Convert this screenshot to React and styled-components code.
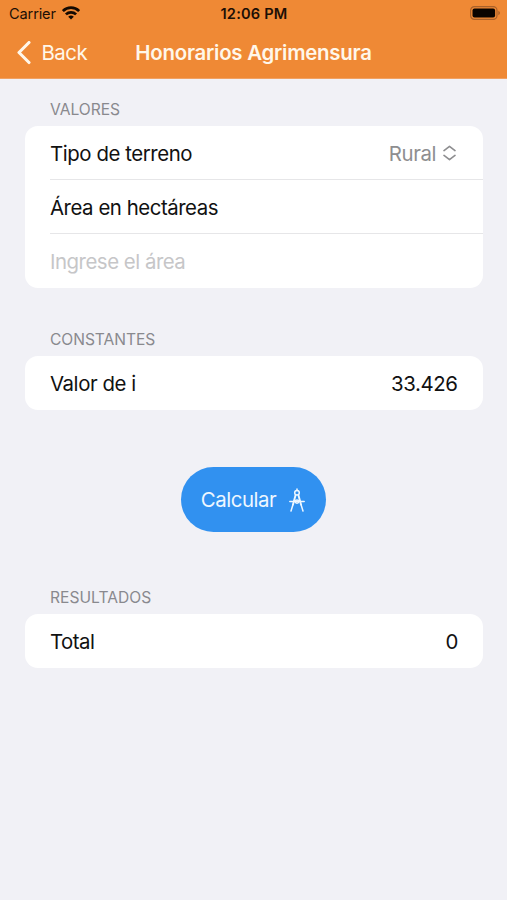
import React from "react";
import styled, { createGlobalStyle } from "styled-components";

const GlobalStyle = createGlobalStyle`
  * { box-sizing: border-box; }
  body {
    margin: 0;
    background: #f1f1f6;
    font-family: Inter, "Liberation Sans", sans-serif;
    -webkit-font-smoothing: antialiased;
  }
`;

const Screen = styled.div`
  width: 507px;
  height: 900px;
  overflow: hidden;
  background: #f1f1f6;
  display: flex;
  flex-direction: column;
`;

const Header = styled.header`
  height: 79px;
  background: #ef8935;
  border-bottom: 1px solid #f0a163;
`;

const StatusBar = styled.div`
  height: 27px;
  padding: 1px 7px 0 9px;
  display: grid;
  grid-template-columns: 1fr auto 1fr;
  align-items: center;
  color: #1c0f05;
  font-size: 14.6px;
  line-height: 26px;
`;

const Carrier = styled.div`
  display: flex;
  align-items: center;
  gap: 6px;
  letter-spacing: -0.15px;

  svg {
    margin-top: -3px;
  }
`;

const Clock = styled.div`
  font-weight: 600;
  letter-spacing: 0.2px;
  margin-right: 1px;
`;

const Battery = styled.div`
  display: flex;
  justify-content: flex-end;
  margin-top: -2px;
`;

const NavBar = styled.nav`
  height: 51px;
  padding: 0 17px;
  display: grid;
  grid-template-columns: 1fr auto 1fr;
  align-items: center;
  color: #fff7ea;
`;

const BackButton = styled.button`
  display: flex;
  align-items: center;
  gap: 10.5px;
  padding: 0;
  border: 0;
  background: none;
  color: inherit;
  font: inherit;
  font-size: 20.4px;
  letter-spacing: -0.5px;
`;

const Title = styled.h1`
  margin: 0;
  font-size: 20.4px;
  font-weight: 600;
  letter-spacing: -0.24px;
`;

const Form = styled.main`
  padding: 0 24.5px 0 25px;
  display: flex;
  flex-direction: column;
`;

const Section = styled.section`
  margin-top: ${(p) => p.$top}px;
`;

const SectionTitle = styled.h2`
  margin: 0 0 6.5px 25px;
  height: 20px;
  line-height: 20px;
  font-size: 15.6px;
  font-weight: 400;
  color: #89898e;
  letter-spacing: ${(p) => p.$track}px;
`;

const Card = styled.div`
  background: #fff;
  border-radius: 13px;
  overflow: hidden;
`;

const Row = styled.div`
  height: 54px;
  margin-left: 25px;
  padding: 1px 25px 0 0;
  display: flex;
  align-items: center;
  justify-content: space-between;
  font-size: 20.4px;
  color: #111;

  &:not(:last-child) {
    padding-top: 2px;
    border-bottom: 1px solid #e6e6e8;
  }

  &:last-child {
    height: 53.5px;
  }
`;

const Text = styled.span`
  letter-spacing: ${(p) => p.$track || 0}px;
  white-space: nowrap;
`;

const Picker = styled.span`
  display: flex;
  align-items: center;
  gap: 7px;
  margin-right: 1.5px;
  color: #8e8e90;

  svg {
    margin-top: -1px;
  }
`;

const AreaInput = styled.input`
  width: 100%;
  padding: 0;
  border: 0;
  outline: 0;
  background: none;
  font: inherit;
  letter-spacing: -0.48px;

  &::placeholder {
    color: #c6c6c8;
    opacity: 1;
  }
`;

const CalcButton = styled.button`
  align-self: center;
  margin-top: 57.3px;
  width: 145px;
  height: 65px;
  padding: 0 2px 0 0;
  border: 0;
  border-radius: 33px;
  background: #3191f0;
  color: #eef7ff;
  font: inherit;
  font-size: 20.4px;
  display: flex;
  align-items: center;
  justify-content: center;
  gap: 12.5px;

  svg {
    margin-top: 1px;
  }
`;

const Wifi = () => (
  <svg width="18" height="14" viewBox="0 0 18 14" fill="none" stroke="#140a02" strokeWidth="2.7">
    <path d="M.9 5.1a11.4 11.4 0 0 1 16.2 0" />
    <path d="M3.9 8.4a7.3 7.3 0 0 1 10.2 0" />
    <path d="M9 13.6 6.2 10.8a4 4 0 0 1 5.6 0Z" fill="#140a02" stroke="none" />
  </svg>
);

const BatteryIcon = () => (
  <svg width="30" height="14" viewBox="0 0 30 14">
    <rect x="0.6" y="0.6" width="26.4" height="12.8" rx="3.8" fill="none" stroke="#a9612a" strokeWidth="1.2" />
    <rect x="2.5" y="2.5" width="22.6" height="9" rx="2" fill="#0a0400" />
    <path d="M28.3 4.8q1.7.8 1.7 2.2t-1.7 2.2Z" fill="#a9612a" />
  </svg>
);

const BackChevron = () => (
  <svg width="14" height="24" viewBox="0 0 14 24" fill="none" stroke="currentColor" strokeWidth="3.1" strokeLinecap="round" strokeLinejoin="round">
    <path d="M12 1.5 2 11.5l10 10" />
  </svg>
);

const UpDown = () => (
  <svg width="13" height="16" viewBox="0 0 13 16" fill="none" stroke="currentColor" strokeWidth="1.6" strokeLinecap="round" strokeLinejoin="round">
    <path d="M1 5.6 6.5 1.3 12 5.6M1 10.4l5.5 4.3 5.5-4.3" />
  </svg>
);

const Compass = () => (
  <svg width="16" height="24" viewBox="0 0 16 24" fill="none" stroke="currentColor" strokeWidth="1.5" strokeLinecap="round" strokeLinejoin="round">
    <path d="M8 1v1.5" />
    <circle cx="8" cy="4.8" r="2.3" />
    <path d="M6.6 7 4 16.5M9.4 7l2.6 9.5" strokeWidth="1.9" />
    <path d="M4 16.5 2 23M12 16.5l2 6.5" />
    <path d="M.8 13.6h14.4" />
    <circle cx="8" cy="13.6" r="1.7" />
  </svg>
);

export default function App() {
  return (
    <>
      <GlobalStyle />
      <Screen>
        <Header>
          <StatusBar>
            <Carrier>
              Carrier
              <Wifi />
            </Carrier>
            <Clock>12:06 PM</Clock>
            <Battery>
              <BatteryIcon />
            </Battery>
          </StatusBar>
          <NavBar>
            <BackButton>
              <BackChevron />
              Back
            </BackButton>
            <Title>Honorarios Agrimensura</Title>
          </NavBar>
        </Header>
        <Form>
          <Section $top={20.5}>
            <SectionTitle $track={-0.02}>VALORES</SectionTitle>
            <Card>
              <Row>
                <Text $track={-0.43}>Tipo de terreno</Text>
                <Picker>
                  <Text $track={-0.4}>Rural</Text>
                  <UpDown />
                </Picker>
              </Row>
              <Row>
                <Text $track={-0.46}>Área en hectáreas</Text>
              </Row>
              <Row>
                <AreaInput placeholder="Ingrese el área" />
              </Row>
            </Card>
          </Section>
          <Section $top={42}>
            <SectionTitle $track={-0.05}>CONSTANTES</SectionTitle>
            <Card>
              <Row>
                <Text $track={-0.43}>Valor de i</Text>
                <Text $track={-0.4}>33.426</Text>
              </Row>
            </Card>
          </Section>
          <CalcButton>
            <Text $track={-0.43}>Calcular</Text>
            <Compass />
          </CalcButton>
          <Section $top={56}>
            <SectionTitle $track={0.02}>RESULTADOS</SectionTitle>
            <Card>
              <Row>
                <Text $track={-0.5}>Total</Text>
                <Text $track={-0.8}>0</Text>
              </Row>
            </Card>
          </Section>
        </Form>
      </Screen>
    </>
  );
}
